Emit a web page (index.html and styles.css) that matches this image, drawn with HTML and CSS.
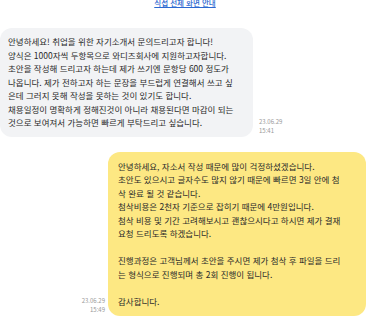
FILE: index.html
```html
<!DOCTYPE html>
<html lang="ko">
<head>
    <meta charset="UTF-8">
    <meta name="viewport" content="width=device-width, initial-scale=1.0">
    <title>문의 대화</title>
    <link rel="stylesheet" href="styles.css">
</head>
<body>
    <!-- 상단 안내 링크 -->
    <div class="notice">
        <a href="#">직접 전체 화면 안내</a>
    </div>

    <div class="chat">
        <!-- 받은 메시지 -->
        <div class="row row-in">
            <div class="bubble bubble-in">
                안녕하세요! 취업을 위한 자기소개서 문의드리고자 합니다!<br>
                양식은 1000자씩 두항목으로 와디즈회사에 지원하고자합니다.<br>
                초안을 작성해 드리고자 하는데 제가 쓰기엔 문항당 600 정도가<br>
                나옵니다. 제가 전하고자 하는 문장을 부드럽게 연결해서 쓰고 싶<br>
                은데 그러지 못해 작성을 못하는 것이 있기도 합니다.<br>
                채용일정이 명확하게 정해진것이 아니라 채용된다면 마감이 되는<br>
                것으로 보여져서 가능하면 빠르게 부탁드리고 싶습니다.
            </div>
            <div class="time">23.06.29<br>15:41</div>
        </div>

        <!-- 보낸 메시지 -->
        <div class="row row-out">
            <div class="time">23.06.29<br>15:49</div>
            <div class="bubble bubble-out">
                안녕하세요, 자소서 작성 때문에 많이 걱정하셨겠습니다.<br>
                초안도 있으시고 글자수도 많지 않기 때문에 빠르면 3일 안에 첨<br>
                삭 완료 될 것 같습니다.<br>
                첨삭비용은 2천자 기준으로 잡히기 때문에 4만원입니다.<br>
                첨삭 비용 및 기간 고려해보시고 괜찮으시다고 하시면 제가 결재<br>
                요청 드리도록 하겠습니다.<br>
                <br>
                진행과정은 고객님께서 초안을 주시면 제가 첨삭 후 파일을 드리<br>
                는 형식으로 진행되며 총 2회 진행이 됩니다.<br>
                <br>
                감사합니다.
            </div>
        </div>
    </div>
</body>
</html>
```

FILE: styles.css
```css
body {
    margin: 0;
    background: #fff;
    font-family: "Noto Sans CJK KR", "Noto Sans", sans-serif;
    color: #2a2a2a;
}

.notice {
    margin-top: -6px;
    height: 34px;
    text-align: center;
    line-height: 10px;
}
.notice a {
    font-size: 7.5px;
    font-weight: 500;
    color: #2b68d0;
    text-decoration: underline;
}

.chat {
    display: flex;
    flex-direction: column;
    gap: 15px;
    padding-right: 4px;
}

.row {
    display: flex;
    align-items: flex-end;
    gap: 6px;
}
.row-out {
    justify-content: flex-end;
    gap: 3px;
}

.bubble {
    box-sizing: border-box;
    font-size: 8.5px;
    line-height: 13.5px;
    white-space: nowrap;
    border-radius: 12px;
}
.bubble-in {
    width: 253px;
    padding: 7px 8px;
    background: #f2f3f5;
}
.bubble-out {
    width: 258px;
    padding: 8px 10px;
    background: #fde883;
}

.time {
    font-size: 6px;
    line-height: 9px;
    color: #999;
    padding-bottom: 2px;
}
.row-out .time {
    text-align: right;
}
```
